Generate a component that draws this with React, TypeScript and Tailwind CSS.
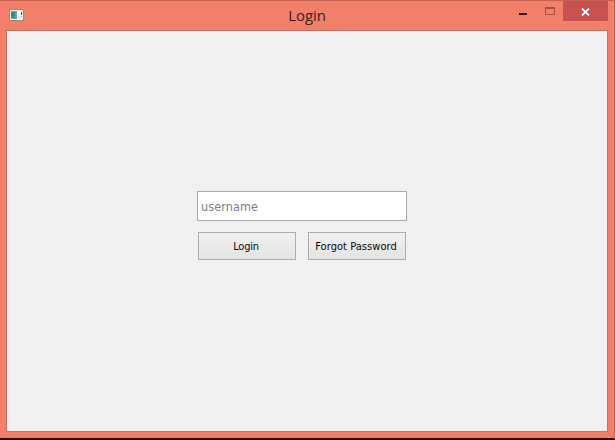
import React from "react";

function AppIcon() {
  return (
    <svg width="16" height="14" viewBox="0 0 16 14" shapeRendering="crispEdges">
      <rect x="0" y="0" width="15" height="12" fill="#a08580" />
      <rect x="1" y="1" width="13" height="10" fill="#f6f8f8" />
      <rect x="2" y="2" width="6" height="8" fill="#6fa59d" />
      <rect x="2" y="3" width="4" height="6" fill="#478a7c" />
      <rect x="9" y="8" width="2" height="1" fill="#c3cccb" />
      <rect x="12" y="3" width="1" height="3" fill="#34505c" />
      <rect x="12" y="7" width="1" height="1" fill="#80949a" />
    </svg>
  );
}

function WindowControls() {
  return (
    <div className="flex h-5 items-start">
      <button aria-label="Minimize" className="flex h-5 w-[26px] pt-3">
        <span className="block h-[2px] w-2 bg-[#35110d]" />
      </button>
      <button aria-label="Maximize" className="flex h-5 w-[18px] pt-[6px]">
        <span className="block h-2 w-[10px] border border-t-2 border-[#a64e3f]" />
      </button>
      <button aria-label="Close" className="flex h-5 w-[45px] justify-center bg-[#c75050] pt-[7px]">
        <svg width="9" height="8" viewBox="0 0 9 8">
          <path d="M1 .5 8 7.5M8 .5 1 7.5" stroke="#fff" strokeWidth="1.8" fill="none" />
        </svg>
      </button>
    </div>
  );
}

function PushButton({ label, spacing }: { label: string; spacing: string }) {
  return (
    <button
      className={`flex h-7 w-[98px] items-center justify-center border border-[#acacac] bg-linear-to-b from-[#f0f0f0] to-[#e4e4e4] pt-[2px] pr-px font-['DejaVu_Sans_Condensed','DejaVu_Sans',sans-serif] text-[11px] font-stretch-condensed whitespace-nowrap text-[#08080c] ${spacing}`}
    >
      {label}
    </button>
  );
}

export default function App() {
  return (
    <div className="flex h-[440px] w-[615px] flex-col border-t border-r border-b-2 border-t-[#c46151] border-r-[#bd6050] border-b-[#2b0e0a] bg-[#f17f6a] pr-[6px] pb-[6px] pl-[6px]">
      <header className="grid h-[29px] shrink-0 grid-cols-[1fr_auto_1fr] items-start">
        <div className="pt-2 pl-[3px]">
          <AppIcon />
        </div>
        <h1 className="pt-1 font-['Open_Sans','Noto_Sans',sans-serif] text-[15px] leading-5 tracking-[-0.1px] text-[#431b17]">
          Login
        </h1>
        <div className="flex justify-end">
          <WindowControls />
        </div>
      </header>
      <main className="flex flex-1 flex-col items-center border border-[#c27263] bg-[#f0f0f0] pt-40 pr-[11px]">
        <input
          placeholder="username"
          className="h-[30px] w-[210px] border border-[#ababab] bg-white pt-px pl-[3.5px] font-['DejaVu_Sans_Condensed','DejaVu_Sans',sans-serif] text-[12.5px] font-stretch-condensed tracking-[0.1px] text-black outline-none placeholder:text-[#808080]"
        />
        <div className="mt-[11px] flex gap-3">
          <PushButton label="Login" spacing="tracking-[-0.2px]" />
          <PushButton label="Forgot Password" spacing="tracking-[0.05px]" />
        </div>
      </main>
    </div>
  );
}
